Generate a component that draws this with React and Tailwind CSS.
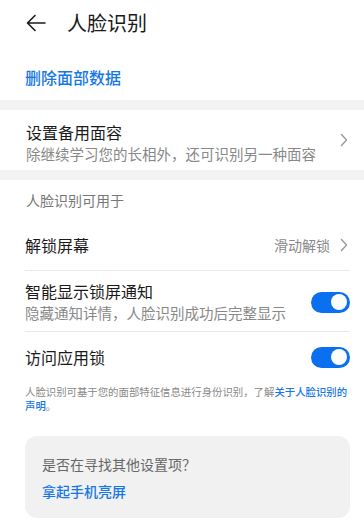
import React from "react";

const font = { fontFamily: '"Noto Sans CJK SC", "Noto Sans", sans-serif' };

function Chevron() {
  return (
    <svg width="8" height="14" viewBox="0 0 8 14" className="shrink-0">
      <path d="M1.5 1.5 L6.5 7 L1.5 12.5" fill="none" stroke="#9a9a9a" strokeWidth="1.4" strokeLinecap="round" strokeLinejoin="round" />
    </svg>
  );
}

function Toggle() {
  return (
    <div className="w-[39px] h-[21px] rounded-full bg-[#0a70f0] flex items-center justify-end px-[3px] shrink-0">
      <div className="w-[16px] h-[16px] rounded-full bg-white" />
    </div>
  );
}

export default function App() {
  return (
    <div className="w-[364px] h-[522px] bg-white overflow-hidden" style={font}>
      {/* Header */}
      <div className="h-[45px] flex items-center pl-[26px]">
        <svg width="20" height="18" viewBox="0 0 20 18">
          <path d="M19 9 H2 M9 1.5 L1.5 9 L9 16.5" fill="none" stroke="#1a1a1a" strokeWidth="1.6" strokeLinecap="round" strokeLinejoin="round" />
        </svg>
        <div className="ml-[21px] text-[20px] leading-none text-[#1a1a1a]">人脸识别</div>
      </div>
      {/* Delete */}
      <div className="h-[55px] flex items-center pl-[25px] pt-[8px]">
        <div className="text-[16px] leading-none text-[#1677e5] font-medium">删除面部数据</div>
      </div>
      <div className="h-[10px] bg-[#f3f3f3]" />
      {/* Backup face */}
      <div className="h-[60px] flex items-center pl-[26px] pr-[16px] pt-[5px]">
        <div className="flex-1">
          <div className="text-[16px] leading-[20px] text-[#1a1a1a]">设置备用面容</div>
          <div className="text-[14.5px] leading-[18px] text-[#888888] mt-[3px]">除继续学习您的长相外，还可识别另一种面容</div>
        </div>
        <div className="-mt-[5px]"><Chevron /></div>
      </div>
      <div className="h-[10px] bg-[#f3f3f3]" />
      {/* Section label */}
      <div className="h-[40px] flex items-center pl-[26px]">
        <div className="text-[14px] leading-none text-[#777777]">人脸识别可用于</div>
      </div>
      {/* Rows */}
      <div className="pl-[25px] pr-[14px]">
        <div className="h-[51px] flex items-center border-b border-[#e8e8e8]">
          <div className="flex-1 text-[16px] leading-none text-[#1a1a1a]">解锁屏幕</div>
          <div className="text-[14px] leading-none text-[#888888] mr-[10px]">滑动解锁</div>
          <div className="mr-[2px]"><Chevron /></div>
        </div>
        <div className="h-[61px] flex items-center border-b border-[#e8e8e8]">
          <div className="flex-1">
            <div className="text-[16px] leading-[20px] text-[#1a1a1a]">智能显示锁屏通知</div>
            <div className="text-[14.5px] leading-[18px] text-[#888888] mt-[3px]">隐藏通知详情，人脸识别成功后完整显示</div>
          </div>
          <div className="mt-[2px]"><Toggle /></div>
        </div>
        <div className="h-[50px] flex items-center">
          <div className="flex-1 text-[16px] leading-none text-[#1a1a1a]">访问应用锁</div>
          <Toggle />
        </div>
        <div className="text-[10.4px] leading-[14px] text-[#888888] mt-[3px] whitespace-nowrap">
          <div>
            人脸识别可基于您的面部特征信息进行身份识别，了解<span className="text-[#1677e5] font-medium">关于人脸识别的</span>
          </div>
          <div>
            <span className="text-[#1677e5] font-medium">声明</span>。
          </div>
        </div>
        <div className="mt-[23px] h-[82px] rounded-[12px] bg-[#f1f1f1] px-[17px] flex flex-col justify-center">
          <div className="text-[14px] leading-none text-[#666666]">是否在寻找其他设置项？</div>
          <div className="text-[14px] leading-none text-[#1677e5] font-medium mt-[13px]">拿起手机亮屏</div>
        </div>
      </div>
    </div>
  );
}
